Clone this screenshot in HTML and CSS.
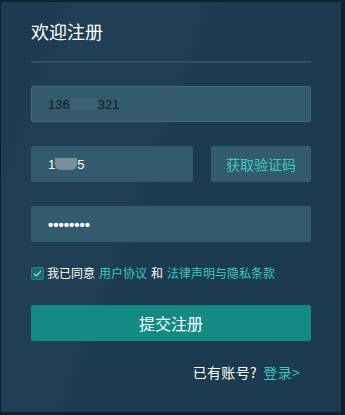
FILE: index.html
```html
<!DOCTYPE html>
<html>
<head>
  <meta charset="utf-8">
  <title>欢迎注册</title>
  <link rel="stylesheet" href="styles.css">
</head>
<body>
  <div class="panel">
    <div class="title">欢迎注册</div>
    <div class="divider"></div>

    <div class="field">
      <span class="dark">136</span><span class="mask wide"></span><span class="dark">321</span>
    </div>

    <div class="code-row">
      <div class="field short">
        <span>1</span><span class="mask"></span><span>5</span>
      </div>
      <div class="code-btn">获取验证码</div>
    </div>

    <div class="field">
      <span class="dots">••••••••</span>
    </div>

    <div class="agree">
      <span class="check">
        <svg width="11" height="11" viewBox="0 0 11 11"><path d="M2 5.8 L4.4 8 L9 2.8" fill="none" stroke="#b9d6d4" stroke-width="1.2"/></svg>
      </span>
      <span>我已同意</span>
      <a class="link">用户协议</a>
      <span>和</span>
      <a class="link">法律声明与隐私条款</a>
    </div>

    <div class="submit">提交注册</div>

    <div class="login">已有账号? <a class="link">登录&gt;</a></div>
  </div>
</body>
</html>
```

FILE: styles.css
```css
body {
  margin: 0;
  background-color: #0b2233;
  font-family: "Noto Sans CJK SC", "Liberation Sans", sans-serif;
  overflow: hidden;
}
.panel {
  width: 340px;
  height: 410px;
  margin: 2px 0 0 1px;
  box-sizing: border-box;
  padding: 17px 30px 0 30px;
  background-color: #1c3a50;
  background-image: linear-gradient(110deg, rgba(255,255,255,0) 10%, rgba(255,255,255,0.025) 16%, rgba(255,255,255,0.025) 40%, rgba(255,255,255,0) 46%);
  color: #fff;
}
.title {
  font-size: 18px;
  line-height: 24px;
}
.divider {
  height: 2px;
  margin-top: 18px;
  background-color: #2f5067;
}
.field {
  height: 36px;
  box-sizing: border-box;
  margin-top: 23px;
  padding-left: 16px;
  display: flex;
  align-items: center;
  background-color: #345a6e;
  border: 1px solid #476c80;
  border-radius: 2px;
  font-family: "Liberation Sans", sans-serif;
  font-size: 13px;
  color: #fff;
}
.field .dark {
  color: #151a1e;
}
.mask {
  display: inline-block;
  width: 22px;
  height: 12px;
  background-color: #8a9ba6;
  border-radius: 0 0 6px 6px;
  opacity: 0.8;
}
.mask.wide {
  width: 28px;
  background-color: #3f6174;
  opacity: 1;
}
.dots {
  font-size: 15px;
  font-weight: bold;
  letter-spacing: 0;
}
.code-row {
  display: flex;
  gap: 18px;
  margin-top: 24px;
}
.code-row .field {
  margin-top: 0;
  border-color: #345a6e;
}
.field.short {
  width: 162px;
}
.code-btn {
  flex: 1;
  height: 36px;
  display: flex;
  align-items: center;
  justify-content: center;
  background-color: #345a6e;
  border-radius: 2px;
  color: #3ccbc0;
  font-size: 14px;
}
.code-row + .field {
  margin-top: 24px;
  border-color: #345a6e;
}
.agree {
  margin-top: 23px;
  display: flex;
  align-items: center;
  gap: 4px;
  font-size: 12px;
  line-height: 16px;
}
.check {
  width: 13px;
  height: 13px;
  box-sizing: border-box;
  display: flex;
  align-items: center;
  justify-content: center;
  background-color: #1b6b69;
  border: 1px solid #2a8581;
  border-radius: 2px;
  margin-right: -1px;
}
.link {
  color: #3ccbc0;
  text-decoration: none;
}
.submit {
  height: 36px;
  margin-top: 24px;
  display: flex;
  align-items: center;
  justify-content: center;
  background-color: #138a84;
  border-radius: 2px;
  font-size: 16px;
}
.login {
  margin-top: 21px;
  padding-right: 11px;
  text-align: right;
  font-size: 14px;
  line-height: 20px;
  letter-spacing: 0.3px;
}
.login .link {
  margin-left: 3px;
}
```
